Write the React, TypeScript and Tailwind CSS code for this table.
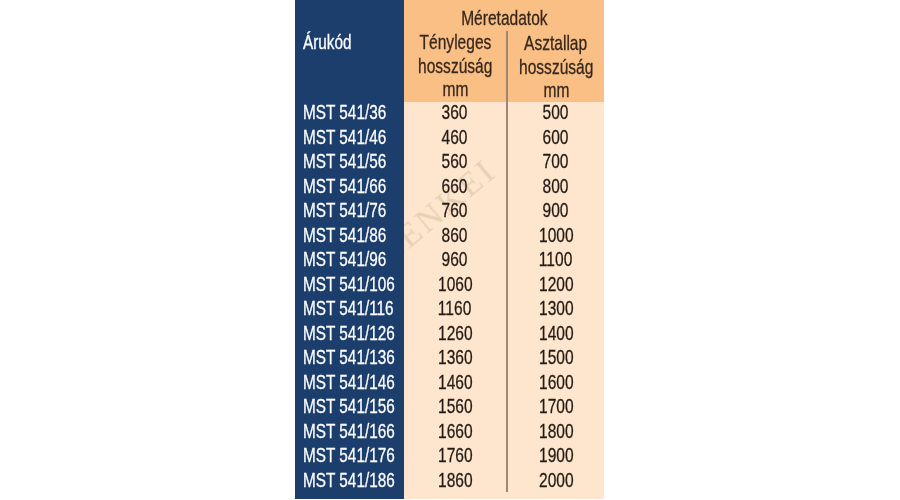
const rows = [
  ['MST 541/36', '360', '500'],
  ['MST 541/46', '460', '600'],
  ['MST 541/56', '560', '700'],
  ['MST 541/66', '660', '800'],
  ['MST 541/76', '760', '900'],
  ['MST 541/86', '860', '1000'],
  ['MST 541/96', '960', '1100'],
  ['MST 541/106', '1060', '1200'],
  ['MST 541/116', '1160', '1300'],
  ['MST 541/126', '1260', '1400'],
  ['MST 541/136', '1360', '1500'],
  ['MST 541/146', '1460', '1600'],
  ['MST 541/156', '1560', '1700'],
  ['MST 541/166', '1660', '1800'],
  ['MST 541/176', '1760', '1900'],
  ['MST 541/186', '1860', '2000'],
]

// condensed look: Liberation Sans squeezed horizontally
function Narrow({ children, left }: { children: React.ReactNode; left?: boolean }) {
  return (
    <span
      className={
        left
          ? 'inline-block whitespace-nowrap scale-x-[0.73] origin-left [-webkit-text-stroke:0.3px_currentColor]'
          : 'inline-block whitespace-nowrap scale-x-[0.74] origin-center [-webkit-text-stroke:0.3px_currentColor]'
      }
    >
      {children}
    </span>
  )
}

export default function App() {
  return (
    <div
      className="w-[900px] h-[500px] bg-white text-[21px] text-[#241b15]"
      style={{ fontFamily: '"Liberation Sans", Arial, sans-serif' }}
    >
      <div className="relative ml-[295px] w-[309px] h-[499px] overflow-hidden bg-[#fde6cd]">
        {/* watermark: above the cream background, under the blue column and the text */}
        <div
          className="absolute left-[72px] top-[192px] -rotate-[40deg] text-[34px] leading-[38px] tracking-[3px] text-[#e8cfb6] blur-[0.5px] pointer-events-none select-none"
          style={{ fontFamily: '"Liberation Serif", serif' }}
        >
          LENKEI
        </div>

        {/* header */}
        <div className="relative grid grid-cols-[109px_200px] h-[100px]">
          <div className="bg-[#1c3e6c] text-white pl-[8px] pt-[30px] leading-[24px]">
            <Narrow left>Árukód</Narrow>
          </div>
          <div className="bg-[#f9bf85] pt-[6px] leading-[24px] text-[#35271c]">
            <div className="text-center">
              <Narrow>Méretadatok</Narrow>
            </div>
            <div className="grid grid-cols-[102px_98px] leading-[23.5px]">
              <div className="flex flex-col items-center">
                <Narrow>Tényleges</Narrow>
                <Narrow>hosszúság</Narrow>
                <Narrow>mm</Narrow>
              </div>
              <div className="flex flex-col items-center border-l-2 border-[#9e8674] mt-[1px]">
                <Narrow>Asztallap</Narrow>
                <Narrow>hosszúság</Narrow>
                <Narrow>mm</Narrow>
              </div>
            </div>
          </div>
        </div>

        {/* body */}
        <div className="relative grid grid-cols-[109px_102px_98px] leading-[24.5px]">
          {rows.map(([code, len, top]) => (
            <div key={code} className="contents">
              <div className="bg-[#1c3e6c] text-white pl-[8px] h-[24.5px]">
                <Narrow left>{code}</Narrow>
              </div>
              <div className="text-center h-[24.5px]">
                <Narrow>{len}</Narrow>
              </div>
              <div className="text-center h-[24.5px] border-l-2 border-[#9e8674]">
                <Narrow>{top}</Narrow>
              </div>
            </div>
          ))}
          <div className="bg-[#1c3e6c] h-[7px]" />
          <div className="h-[7px]" />
          <div className="h-[7px]" />
        </div>
      </div>
    </div>
  )
}
